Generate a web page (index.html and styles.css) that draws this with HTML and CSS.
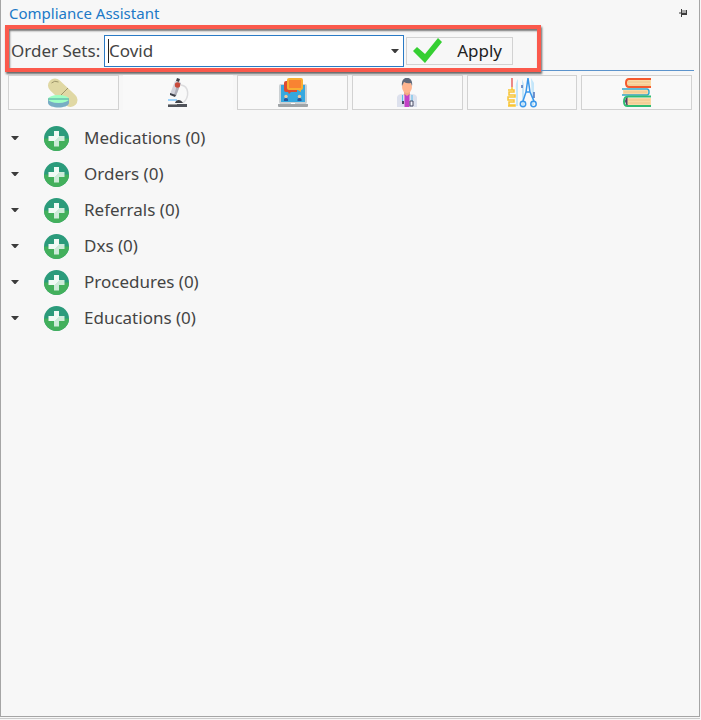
FILE: index.html
```html
<!DOCTYPE html>
<html lang="en">
<head>
<meta charset="utf-8">
<title>Compliance Assistant</title>
<link rel="stylesheet" href="styles.css">
</head>
<body>
<svg class="defs" aria-hidden="true">
  <defs>
    <linearGradient id="plus-fill" x1="0" y1="0" x2="1" y2="1">
      <stop offset="0.5" stop-color="#f0faf5"/>
      <stop offset="0.5" stop-color="#cdebd9"/>
    </linearGradient>
    <symbol id="add" viewBox="0 0 25 25">
      <circle cx="12.5" cy="12.5" r="12.5" fill="#2b9b7b"/>
      <path d="M0 12.5a12.5 12.5 0 0 0 25 0z" fill="#43b05c"/>
      <path d="M10 5h5v5h5.500v5H15v5.500h-5V15H4.500v-5H10z" fill="url(#plus-fill)"/>
    </symbol>
    <symbol id="caret" viewBox="0 0 8 4"><path d="M0 0h8L4.500 4h-1z" fill="#3c3c3c"/></symbol>
  </defs>
</svg>
<main class="panel">
  <header class="title-bar">
    <h1>Compliance Assistant</h1>
    <button class="pin" type="button" aria-label="Pin panel">
      <svg width="8" height="8" viewBox="0 0 8 8"><path d="M0 3h2v2H0z" fill="#999"/><path d="M2 0h1v1h5v5H3v2H2z" fill="#3c3c3c"/><path d="M3 1h4v3H3z" fill="#aaa"/></svg>
    </button>
  </header>

  <div class="toolbar">
    <form class="order-form">
      <label for="order-set">Order Sets:</label>
      <div class="combo">
        <span class="text-cursor"></span>
        <input id="order-set" type="text" role="combobox" aria-expanded="false" value="Covid">
        <button class="combo-toggle" type="button" aria-label="Show order sets"><svg width="8" height="4"><use href="#caret"/></svg></button>
      </div>
      <button class="apply" type="button">
        <svg width="30" height="26" viewBox="0 0 30 26"><path d="M0 13l4-4 8 7L25 0l4 4-17 21z" fill="#35cf32"/></svg>
        <span>Apply</span>
      </button>
    </form>
    <div class="rule"></div>
  </div>

  <nav class="tabs" aria-label="Categories">
    <button class="tab" type="button" aria-label="Medications">
      <svg width="30" height="30" viewBox="0 0 30 30">
        <path d="M7 7.500l15.500 14.500" stroke="#e0d8a4" stroke-width="14" stroke-linecap="round"/>
        <path d="M3.500 5q3-3 7-1M13 17l7-7" fill="none" stroke="#9e966b" stroke-width="1"/>
        <path d="M0 21h21v4c-1 6-20 6-21 0z" fill="#78adc4"/>
        <ellipse cx="10.500" cy="21" rx="10.500" ry="4" fill="#9fffc4"/>
        <path d="M0 21h21" stroke="#4f9fa0"/>
      </svg>
    </button>
    <button class="tab selected" type="button" aria-label="Orders">
      <svg width="30" height="30" viewBox="-5 0 30 30">
        <path d="M13 7c8 1 9 12 2 18" fill="none" stroke="#dcdcde" stroke-width="1.500"/>
        <path d="M7 3l6 2-5 13-6-2z" fill="#d3d3dc"/>
        <path d="M10 4l3 1-5 13-2-1z" fill="#b0b0ba"/>
        <path d="M9 0l3 1-1 3-3-1zM2 15l6 2-1 2-5-2z" fill="#3f414b"/>
        <circle cx="9.500" cy="7" r="2.700" fill="#c84a3b"/>
        <path d="M0 22h9" stroke="#7dc3fa" stroke-width="1.500"/>
        <path d="M7 25c1-4 6-4 8 0z" fill="#40434a"/>
        <path d="M0 26h19v3H0z" fill="#50535a"/><path d="M0 26h9v1H0z" fill="#999"/>
      </svg>
    </button>
    <button class="tab" type="button" aria-label="Referrals">
      <svg width="30" height="30" viewBox="0 0 30 30">
        <rect x="1" y="6" width="28" height="20" rx="2" fill="#cbd0d3"/>
        <path d="M3 7h24v17H3z" fill="#35a8e0"/>
        <path d="M8 3h11v11h-6l-2 2-1-2H8q-2 0-2-2V5q0-2 2-2z" fill="#dd4b32"/>
        <path d="M11 0h12q2 0 2 2v8q0 2-2 2v2l-3-2h-9q-2 0-2-2V2q0-2 2-2z" fill="#f9ae32"/><path d="M11 2h12v8H11z" fill="#f98332"/>
        <circle cx="8" cy="18.500" r="1.700" fill="#f3c69c"/><circle cx="21.500" cy="18.500" r="1.700" fill="#f3c69c"/>
        <path d="M6 23v-2q2-2 4 0v2zM19.500 23v-2q2-2 4 0v2z" fill="#28569b"/>
        <path d="M0 26h30v2q0 1-1 1H1q-1 0-1-1z" fill="#a0a4a7"/><path d="M2 24h26v2H2z" fill="#cbd0d3"/><path d="M13 25h4v1h-4z" fill="#fff"/>
      </svg>
    </button>
    <button class="tab" type="button" aria-label="Diagnoses">
      <svg width="30" height="30" viewBox="0 0 30 30">
        <path d="M5 29V19q1-3 5-3h10q4 0 5 3v10z" fill="#dde1ed"/>
        <path d="M12 12h6v5l-3 3-3-3z" fill="#f1aa84"/>
        <path d="M12.500 16l2.500 2 2.500-2v13h-5z" fill="#c342c6"/>
        <ellipse cx="15" cy="9" rx="5" ry="6" fill="#ffb58f"/>
        <path d="M10 8C8-3 22-3 20 8l-1-3q-4 1-7-1z" fill="#616878"/>
        <path d="M10.500 17v6M20 17v6" stroke="#55bcea"/><path d="M11 23v3" stroke="#494b62" stroke-width="2"/>
        <path d="M18 23h3v5h-3z" fill="#f6f7fd" stroke="#494b62"/>
      </svg>
    </button>
    <button class="tab" type="button" aria-label="Procedures">
      <svg width="30" height="30" viewBox="0 0 30 30">
        <path d="M5 0v9" stroke="#e44b49" stroke-width="1.300"/>
        <path d="M5 9v3M1 12h6v2H2v3h6v2H1v3h6v2H2v3h6v1H1" fill="none" stroke="#f8c536" stroke-width="1.500"/>
        <path d="M11 1q-3 4-2 11v16h2V1zM15 1l2 5v22h-2V8zM24 0l3 5v22h-2z" fill="#c4e6fa"/>
        <path d="M15 7v3M27 14v6" stroke="#4c73bd" stroke-width="1.500"/>
        <path d="M21 0l-2 14-3 9M21 0l2 14 4 9M19 14h4" fill="none" stroke="#3a97ea" stroke-width="1.500"/>
        <circle cx="16" cy="26" r="2.700" fill="none" stroke="#3a97ea" stroke-width="1.500"/><circle cx="26.500" cy="26" r="2.700" fill="none" stroke="#3a97ea" stroke-width="1.500"/>
      </svg>
    </button>
    <button class="tab" type="button" aria-label="Educations">
      <svg width="30" height="30" viewBox="0 0 30 30">
        <path d="M5 2h24v7H5zM1 12h25v5H1zM5 20h24v7H5z" fill="#fad9a5"/>
        <path d="M6 4h22M6 7h22M2 14h23M6 22h22M6 25h22" stroke="#eec48a"/>
        <path d="M29 1H7Q4 1 4 5t3 4h22" fill="none" stroke="#f4592c" stroke-width="2"/>
        <path d="M0 11h25q2 0 2 3t-2 3H0" fill="none" stroke="#36a6c9" stroke-width="1.500"/>
        <path d="M5 19v8q-3-4 0-8" fill="#573e64" stroke="#573e64"/>
        <path d="M29 18.500H6q-4 0-4 5t4 4.500h23" fill="none" stroke="#31bb73" stroke-width="2"/>
      </svg>
    </button>
  </nav>

  <ul class="categories">
    <li><button class="expand" type="button" aria-label="Expand Medications"><svg width="8" height="4"><use href="#caret"/></svg></button><button class="add" type="button" aria-label="Add Medications"><svg width="25" height="25"><use href="#add"/></svg></button><span>Medications (0)</span></li>
    <li><button class="expand" type="button" aria-label="Expand Orders"><svg width="8" height="4"><use href="#caret"/></svg></button><button class="add" type="button" aria-label="Add Orders"><svg width="25" height="25"><use href="#add"/></svg></button><span>Orders (0)</span></li>
    <li><button class="expand" type="button" aria-label="Expand Referrals"><svg width="8" height="4"><use href="#caret"/></svg></button><button class="add" type="button" aria-label="Add Referrals"><svg width="25" height="25"><use href="#add"/></svg></button><span>Referrals (0)</span></li>
    <li><button class="expand" type="button" aria-label="Expand Dxs"><svg width="8" height="4"><use href="#caret"/></svg></button><button class="add" type="button" aria-label="Add Dxs"><svg width="25" height="25"><use href="#add"/></svg></button><span>Dxs (0)</span></li>
    <li><button class="expand" type="button" aria-label="Expand Procedures"><svg width="8" height="4"><use href="#caret"/></svg></button><button class="add" type="button" aria-label="Add Procedures"><svg width="25" height="25"><use href="#add"/></svg></button><span>Procedures (0)</span></li>
    <li><button class="expand" type="button" aria-label="Expand Educations"><svg width="8" height="4"><use href="#caret"/></svg></button><button class="add" type="button" aria-label="Add Educations"><svg width="25" height="25"><use href="#add"/></svg></button><span>Educations (0)</span></li>
  </ul>
</main>
</body>
</html>
```
FILE: styles.css
```css
* {
  box-sizing: border-box;
}

body {
  margin: 0;
  min-height: 100vh;
  display: flex;
  flex-direction: column;
  padding: 0 1px 1px 0;
  gap: 1px;
  background: #f7f7f7;
  color: #444;
  font: 17px/24px "Noto Sans", "Open Sans", sans-serif;
}

body::after {
  content: "";
  height: 1px;
  background: #ccc;
}

.defs {
  position: absolute;
  width: 0;
  height: 0;
}

svg {
  display: block;
}

button,
input {
  margin: 0;
  padding: 0;
  border: 0;
  background: none;
  color: inherit;
  font: inherit;
}

.panel {
  flex: 1;
  border: 1px solid #a5a5a5;
  border-top: 0;
}

.title-bar {
  display: flex;
  align-items: center;
  justify-content: space-between;
  height: 25px;
  padding: 0 12px 0 8px;
}

.title-bar h1 {
  margin: 0;
  color: #2079c7;
  font-size: 15px;
  font-weight: 400;
}

.toolbar {
  display: flex;
  padding: 0 5px 0 4px;
}

.order-form {
  display: flex;
  align-items: center;
  flex: 0 1 536px;
  height: 47px;
  padding: 4px 24px 0 2px;
  border: 4px solid #fb594c;
  box-shadow: 1px 2px 2px #666, inset 1px 2px 2px #777;
}

.order-form label {
  flex: 0 0 93px;
}

.combo {
  position: relative;
  display: flex;
  flex: 1;
  min-width: 0;
  height: 32px;
  border: 1px solid #2a7ac5;
  background: #fff;
}

.combo input {
  flex: 1;
  min-width: 0;
  padding-left: 4px;
  outline: 0;
}

.text-cursor {
  position: absolute;
  left: 3px;
  top: 3px;
  width: 1px;
  height: 24px;
  background: #222;
}

.combo-toggle {
  padding: 0 4px;
}

.apply {
  display: flex;
  align-items: center;
  gap: 14px;
  height: 28px;
  margin-left: 2px;
  padding: 0 10px 0 6px;
  border: 1px solid #d2d2d2;
  color: #222;
}

.rule {
  flex: 1;
  height: 46px;
  border-bottom: 1px solid #5d94cc;
}

.tabs {
  display: grid;
  grid-template-columns: repeat(6, 1fr);
  gap: 4px;
  padding: 3px 7px 0;
}

.tab {
  display: flex;
  align-items: center;
  justify-content: center;
  height: 35px;
  border: 1px solid #d2d2d2;
  background: #f9f9f9;
}

.tab.selected {
  border-color: #f9f9f9;
}

.categories {
  margin: 0;
  padding: 10px 10px 0;
  list-style: none;
}

.categories li {
  display: flex;
  align-items: center;
  height: 36px;
}

.expand {
  height: 24px;
  margin-right: 25px;
}

.add {
  margin-right: 15px;
}
```
